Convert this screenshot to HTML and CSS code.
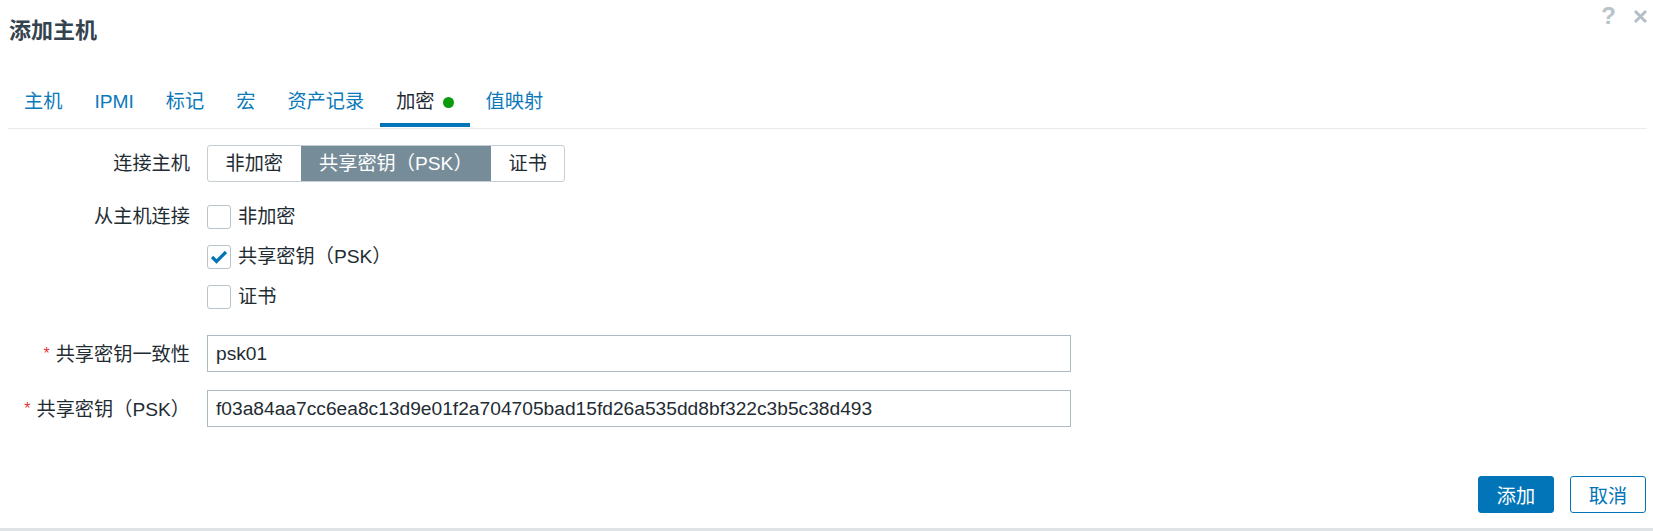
FILE: index.html
```html
<!DOCTYPE html>
<html lang="zh-CN">
<head>
<meta charset="utf-8">
<title>添加主机</title>
<link rel="stylesheet" href="styles.css">
</head>
<body>
<div class="dialog">
  <header class="dlg-head">
    <h4 class="dlg-title">添加主机</h4>
    <div class="head-tools">
      <span class="help">?</span>
      <span class="close"><svg width="15" height="15" viewBox="0 0 15 15"><path d="M2 2 L13 13 M13 2 L2 13" stroke="#b4bec4" stroke-width="3" fill="none"/></svg></span>
    </div>
  </header>

  <ul class="tabs">
    <li class="tab">主机</li>
    <li class="tab">IPMI</li>
    <li class="tab">标记</li>
    <li class="tab">宏</li>
    <li class="tab">资产记录</li>
    <li class="tab active">加密<span class="dot"></span></li>
    <li class="tab">值映射</li>
  </ul>

  <div class="form">
    <div class="row row-seg">
      <div class="label">连接主机</div>
      <div class="seg">
        <span class="seg-item">非加密</span>
        <span class="seg-item on">共享密钥（PSK）</span>
        <span class="seg-item">证书</span>
      </div>
    </div>

    <div class="row row-checks">
      <div class="label lbl-short">从主机连接</div>
      <ul class="checks">
        <li class="check"><span class="cb"></span>非加密</li>
        <li class="check"><span class="cb"><svg width="22" height="22" viewBox="0 0 22 22"><path d="M4 11 L8.5 15.5 L18 6" stroke="#0275b8" stroke-width="3.2" fill="none"/></svg></span>共享密钥（PSK）</li>
        <li class="check"><span class="cb"></span>证书</li>
      </ul>
    </div>

    <div class="row row-input1">
      <div class="label"><span class="req">*</span>共享密钥一致性</div>
      <input class="field" type="text" value="psk01">
    </div>

    <div class="row row-input2">
      <div class="label"><span class="req">*</span>共享密钥（PSK）</div>
      <input class="field" type="text" value="f03a84aa7cc6ea8c13d9e01f2a704705bad15fd26a535dd8bf322c3b5c38d493">
    </div>
  </div>

  <footer class="dlg-foot">
    <button class="btn btn-primary">添加</button>
    <button class="btn btn-alt">取消</button>
  </footer>
</div>
</body>
</html>
```

FILE: styles.css
```css
* { box-sizing: border-box; }

body {
  margin: 0;
  background: #ffffff;
  color: #1f2c33;
  font-family: "Liberation Sans", "Noto Sans CJK SC", sans-serif;
  font-size: 19.2px;
}

.dialog {
  height: 531px;
  display: flex;
  flex-direction: column;
  border-bottom: 3px solid #dfe3e6;
}

.dlg-head {
  display: flex;
  justify-content: space-between;
  align-items: flex-start;
  padding: 0 5px 0 9px;
}

.dlg-title {
  margin: 16px 0 0;
  font-size: 22px;
  line-height: 30px;
  font-weight: bold;
  color: #34434e;
}

.head-tools {
  display: flex;
  align-items: flex-start;
  gap: 17px;
  margin-top: 2px;
}

.help {
  font-family: "Liberation Sans", sans-serif;
  font-weight: bold;
  font-size: 24px;
  line-height: 28px;
  color: #bac3c8;
}

.close {
  display: block;
  margin-top: 7px;
  line-height: 0;
}

.tabs {
  display: flex;
  list-style: none;
  margin: 34px 6px 0 8px;
  padding: 0;
  border-bottom: 1px solid #e8ebed;
}

.tab {
  padding: 10px 16px 9px;
  line-height: 24px;
  color: #0b79ba;
  border-bottom: 4px solid transparent;
  margin-bottom: 1px;
  display: flex;
  align-items: center;
}

.tab.active {
  color: #1f2c33;
  border-bottom-color: #0275b8;
}

.dot {
  width: 11px;
  height: 11px;
  border-radius: 50%;
  background: #0a9b0a;
  margin-left: 8px;
}

.form {
  padding: 16px 0 0 8px;
}

.row {
  display: grid;
  grid-template-columns: 182px 864px;
  column-gap: 17px;
  align-items: start;
}

.label {
  text-align: right;
  line-height: 37px;
  white-space: nowrap;
}

.lbl-short { line-height: 24px; }

.req {
  color: #e33734;
  margin-right: 6px;
  font-size: 16px;
  vertical-align: 2px;
}

.seg {
  display: flex;
  width: max-content;
  height: 37px;
  border: 1px solid #c6ced3;
  border-radius: 3px;
  overflow: hidden;
}

.seg-item {
  padding: 0 17.5px;
  line-height: 35px;
  color: #1f2c33;
}

.seg-item.on {
  background: #768d99;
  color: #ffffff;
  padding: 0 18.5px;
}

.row-checks { margin-top: 23px; }

.checks {
  list-style: none;
  margin: 0;
  padding: 0;
  display: flex;
  flex-direction: column;
  gap: 16px;
}

.check {
  display: flex;
  align-items: center;
  gap: 7px;
  line-height: 24px;
}

.cb {
  width: 24px;
  height: 24px;
  border: 1px solid #b7c4ca;
  border-radius: 3px;
  background: #ffffff;
  display: flex;
  align-items: center;
  justify-content: center;
}

.row-input1 { margin-top: 26px; }
.row-input2 { margin-top: 17px; }

.field {
  width: 864px;
  height: 37px;
  border: 1px solid #acbbc2;
  border-radius: 0;
  padding: 0 8px;
  font: inherit;
  color: #1f2c33;
  background: #ffffff;
  outline: none;
}

.dlg-foot {
  margin-top: auto;
  display: flex;
  justify-content: flex-end;
  gap: 16px;
  padding: 0 7px 15px 0;
}

.btn {
  width: 76px;
  height: 37px;
  border-radius: 3px;
  font: inherit;
  padding: 0;
  cursor: pointer;
}

.btn-primary {
  background: #0275b8;
  border: 1px solid #0275b8;
  color: #ffffff;
}

.btn-alt {
  background: #ffffff;
  border: 1px solid #0275b8;
  color: #0275b8;
}
```
